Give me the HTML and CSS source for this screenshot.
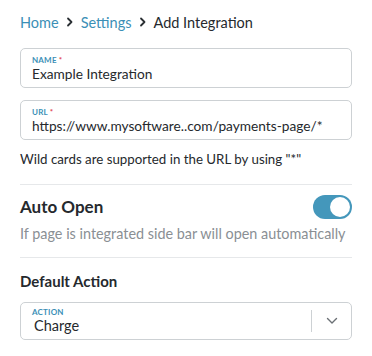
FILE: index.html
```html
<!DOCTYPE html>
<html>
<head>
<meta charset="utf-8">
<link rel="stylesheet" href="styles.css">
</head>
<body>
<div class="page">
  <nav class="crumbs">
    <a class="crumb-link">Home</a>
    <svg class="crumb-sep" width="8" height="10" viewBox="0 0 8 10"><path d="M2 1.5 L5.5 5 L2 8.5" fill="none" stroke="#2a2f33" stroke-width="1.8" stroke-linecap="round" stroke-linejoin="round"/></svg>
    <a class="crumb-link">Settings</a>
    <svg class="crumb-sep" width="8" height="10" viewBox="0 0 8 10"><path d="M2 1.5 L5.5 5 L2 8.5" fill="none" stroke="#2a2f33" stroke-width="1.8" stroke-linecap="round" stroke-linejoin="round"/></svg>
    <span class="crumb-current">Add Integration</span>
  </nav>

  <div class="field">
    <div class="field-label">NAME <span class="req">*</span></div>
    <div class="field-value">Example Integration</div>
  </div>

  <div class="field field-url">
    <div class="field-label">URL <span class="req">*</span></div>
    <div class="field-value">https://www.mysoftware..com/payments-page/*</div>
  </div>
  <p class="hint">Wild cards are supported in the URL by using "*"</p>

  <hr class="divider divider-first">

  <div class="setting-row">
    <h3 class="setting-title">Auto Open</h3>
    <div class="toggle"><div class="knob"></div></div>
  </div>
  <p class="hint hint-muted">If page is integrated side bar will open automatically</p>

  <hr class="divider divider-second">

  <h3 class="section-title">Default Action</h3>
  <div class="field select">
    <div class="select-main">
      <div class="field-label">ACTION</div>
      <div class="field-value">Charge</div>
    </div>
    <div class="select-sep"></div>
    <div class="select-arrow">
      <svg width="12" height="8" viewBox="0 0 12 8"><path d="M1.5 1.5 L6 6 L10.5 1.5" fill="none" stroke="#6b7075" stroke-width="1.4" stroke-linecap="round" stroke-linejoin="round"/></svg>
    </div>
  </div>
</div>
</body>
</html>
```

FILE: styles.css
```css
* { box-sizing: border-box; }
html, body { margin: 0; padding: 0; background: #ffffff; }
body {
  font-family: "Lato", "Liberation Sans", sans-serif;
  color: #25292d;
}
.page {
  padding: 13px 20px 0 20px;
  width: 372px;
}
.crumbs {
  display: flex;
  align-items: center;
  gap: 7px;
  font-size: 14.5px;
  height: 18px;
  margin-bottom: 17px;
}
.crumb-link { color: #3b8fb6; }
.crumb-current { color: #25292d; }
.crumb-sep { display: block; }

.field {
  border: 1px solid #cdd1d4;
  border-radius: 5px;
  height: 40px;
  padding: 6px 11px 0 11px;
}
.field-url { margin-top: 12px; }
.field-label {
  font-size: 8px;
  font-weight: 700;
  color: #3b8fb6;
  letter-spacing: 0.2px;
  line-height: 10px;
}
.req { color: #e0434f; }
.field-value {
  font-size: 13.7px;
  line-height: 18px;
  color: #25292d;
}
.hint {
  margin: 10px 0 0 0;
  font-size: 13.3px;
  line-height: 18px;
  color: #25292d;
}
.hint-muted { color: #8a8f94; margin-top: 6px; font-size: 14.4px; }
.divider {
  border: 0;
  border-top: 1px solid #e6e8ea;
  margin: 0;
}
.divider-first { margin-top: 16px; }
.divider-second { margin-top: 14px; }
.setting-row {
  display: flex;
  justify-content: space-between;
  align-items: center;
  margin-top: 10px;
}
.setting-title, .section-title {
  margin: 0;
  font-weight: 700;
  color: #25292d;
}
.setting-title { font-size: 17px; letter-spacing: 0; line-height: 24px; }
.toggle {
  width: 39px;
  height: 24px;
  border-radius: 12px;
  background: #4497bb;
  position: relative;
}
.knob {
  position: absolute;
  right: 2px;
  top: 2px;
  width: 20px;
  height: 20px;
  border-radius: 50%;
  background: #ffffff;
}
.section-title { margin-top: 13px; line-height: 20px; font-size: 15px; }
.select {
  margin-top: 11px;
  display: flex;
  align-items: center;
  padding: 0;
  height: 38px;
}
.select-main { flex: 1; padding: 0 11px; }
.select-main .field-value { padding-left: 2px; font-size: 14.5px; }
.select-sep {
  width: 1px;
  height: 22px;
  background: #cdd1d4;
}
.select-arrow {
  width: 39px;
  display: flex;
  justify-content: center;
  align-items: center;
}
.select-arrow svg { display: block; }
```
